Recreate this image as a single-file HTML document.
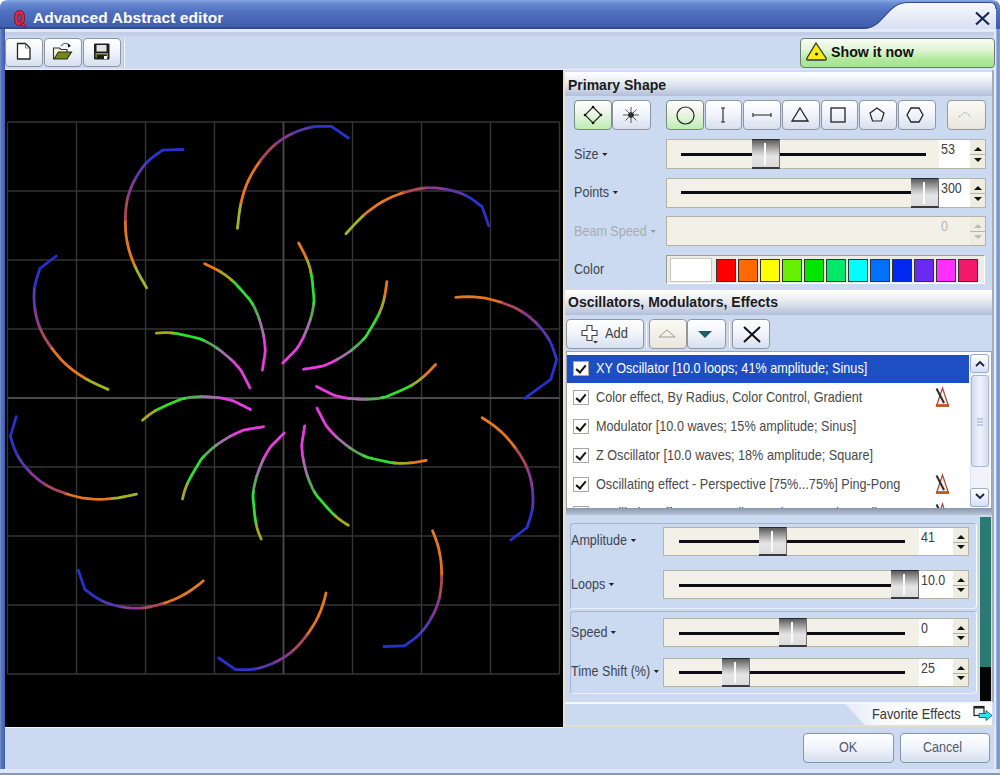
<!DOCTYPE html>
<html><head><meta charset="utf-8">
<style>
*{box-sizing:border-box;margin:0;padding:0}
html,body{width:1000px;height:775px;overflow:hidden}
body{position:relative;background:#cbdaf0;font-family:"Liberation Sans",sans-serif;color:#3a4250}
.a{position:absolute}
.btn{position:absolute;border:1px solid #8e96a4;border-radius:4px;background:linear-gradient(#ffffff,#f2f5fb 45%,#d7e0ef)}
.gbtn{position:absolute;border:1px solid #7a8a80;border-radius:4px;background:linear-gradient(#ffffff,#eef5e8 40%,#bdeeb2)}
.dbtn{position:absolute;border:1px solid #9a9a94;border-radius:4px;background:linear-gradient(#fbfaf6,#e8e6dc)}
.sl{position:absolute;background:#f3f1e7;border:1px solid #b5b3a5;border-right:none}
.trk{position:absolute;height:3px;background:#0c0c14}
.th{position:absolute;width:28px;border-top:1px solid #2a2a2a;border-bottom:2px solid #3a3a3a;border-right:1px solid #707070;background:linear-gradient(#5c5c5c,#c8c8c8 45%,#e4e4e4 60%,#dcdcdc)}
.th:after{content:"";position:absolute;left:12px;top:3px;bottom:2px;width:2px;background:#fafafa}
.tb{position:absolute;background:#fff;border-top:1px solid #b5b3a5;border-bottom:1px solid #b5b3a5;font-size:14.5px;color:#404040;padding:1px 0 0 2px}
.tb b{font-weight:normal;display:inline-block;transform:scaleX(.86);transform-origin:0 0}
.sp{position:absolute;width:16px;background:#efece0;border:1px solid #b5b3a5;border-left:none}
.sp i{position:absolute;left:4px;width:0;height:0;border-left:4px solid transparent;border-right:4px solid transparent}
.sp:after{content:"";position:absolute;left:0;right:0;top:50%;height:1px;background:#b8b5a4}
.lbl{position:absolute;font-size:14.3px;color:#3c4452;white-space:nowrap;transform:scaleX(.88);transform-origin:0 0}
.dd{display:inline-block;width:0;height:0;border-left:3px solid transparent;border-right:3px solid transparent;border-top:3px solid #222;vertical-align:middle;margin-left:4px;margin-top:-2px}
.hdr{position:absolute;border-top:1px solid #e0dccb;background:linear-gradient(#ffffff,#f6f7fa 20%,#dde3ee 55%,#b3bfd9);font-weight:bold;font-size:14px;color:#1a1a1a;line-height:16px}
.row{position:absolute;left:0;width:402px;height:28px;font-size:14.3px;color:#4a4a4a;white-space:nowrap}
.cb{position:absolute;left:6px;top:6px;width:16px;height:15px;background:#fff;border:1px solid #a8a8a0}
.cb:after{content:"";position:absolute;left:4px;top:1px;width:4px;height:8px;border-right:2px solid #111;border-bottom:2px solid #111;transform:rotate(40deg)}
.rt{position:absolute;left:29px;top:5px;transform:scaleX(.885);transform-origin:0 0}
</style></head><body>

<!-- window borders -->
<div class="a" style="left:0;top:0;width:5px;height:775px;background:linear-gradient(90deg,#7a90bc,#5476c8 30%,#3e5eb0)"></div>
<div class="a" style="left:994px;top:28px;width:6px;height:747px;background:linear-gradient(90deg,#e8eef9 0,#dfe7f6 30%,#8aa6dc 45%,#6f8fd0 70%,#8ea6d0)"></div>
<div class="a" style="left:0;top:769px;width:1000px;height:4px;background:#dde7f8"></div>
<div class="a" style="left:0;top:773px;width:1000px;height:2px;background:#8898bc"></div>

<!-- title bar -->
<svg class="a" style="left:0;top:0" width="1000" height="29">
 <defs>
  <linearGradient id="tg" x1="0" y1="0" x2="0" y2="1"><stop offset="0" stop-color="#86a6e4"/><stop offset="0.12" stop-color="#6a8ad2"/><stop offset="0.4" stop-color="#5071bf"/><stop offset="1" stop-color="#3d5ca9"/></linearGradient>
  <linearGradient id="tl" x1="0" y1="0" x2="0" y2="1"><stop offset="0" stop-color="#f6f8fd"/><stop offset="0.5" stop-color="#e8edf8"/><stop offset="1" stop-color="#d6dff2"/></linearGradient>
 </defs>
 <rect x="0" y="0" width="1000" height="29" fill="#ffffff"/>
 <path d="M0 8 Q0 0 8 0 L992 0 Q1000 0 1000 8 L1000 29 L0 29 Z" fill="url(#tg)"/>
 <rect x="0" y="27.3" width="870" height="1.5" fill="#2c4690"/>
 <path d="M864 29 C884 28.5 886 2.5 908 2.5 L990 2.5 Q996 2.5 996 9 L996 29 Z" fill="url(#tl)"/>
 <path d="M864 28.3 C884 28 886 2.5 908 2.5 L990 2.5 Q996 2.5 996 9" fill="none" stroke="#34488a" stroke-width="1.1"/>
 <rect x="0" y="0" width="8" height="6" fill="#fff" opacity="0"/>
 <path d="M976 12.5 L989 24.5 M989 12.5 L976 24.5" stroke="#1c2252" stroke-width="2.2"/>
</svg>
<!-- Q logo -->
<svg class="a" style="left:12px;top:9px" width="16" height="20">
 <path d="M7.5 1.5 C3.5 1.5 2.5 5 2.5 9 C2.5 13 3.5 16.5 7.5 16.5 C11.5 16.5 12.5 13 12.5 9 C12.5 5 11.5 1.5 7.5 1.5 Z M7.5 5 C8.8 5 9 7 9 9 C9 11 8.8 13 7.5 13 C6.2 13 6 11 6 9 C6 7 6.2 5 7.5 5 Z" fill="#ee2244" fill-rule="evenodd" stroke="#5a1020" stroke-width="0.8"/>
 <path d="M8.5 15 L12 18.5 L14 17.5 L11 14 Z" fill="#ee2244" stroke="#5a1020" stroke-width="0.7"/>
</svg>
<div class="a" style="left:33px;top:9px;font-size:15.5px;font-weight:bold;color:#fff;white-space:nowrap;letter-spacing:0.1px">Advanced Abstract editor</div>

<!-- toolbar area -->
<div class="a" style="left:5px;top:28.5px;width:989px;height:41.5px;background:linear-gradient(#e6edf9,#e2e9f7 6%,#c2cde4 8%,#c4d0e8 16%,#cbdaf0 19%,#cbdaf0 96%,#e6ecf8 97%)"></div>
<div class="btn" style="left:5px;top:38px;width:38px;height:29px"></div>
<div class="btn" style="left:44px;top:38px;width:38px;height:29px"></div>
<div class="btn" style="left:83px;top:38px;width:38px;height:29px"></div>
<div class="a" style="left:122.5px;top:38px;width:2px;height:30px;background:#c9c6b6;border-right:1px solid #f4f6fb"></div>
<svg class="a" style="left:5px;top:38px" width="120" height="29">
 <path d="M12.5 5.5 h8 l4.5 4.5 v11 h-12.5 z" fill="#fff" stroke="#222" stroke-width="1.3" stroke-linejoin="round"/>
 <path d="M20.5 5.5 v4.5 h4.5" fill="none" stroke="#666" stroke-width="0.8"/>
 <path d="M48.5 10 h6 l1.5 1.5 h6 v9 h-13.5 z" fill="#f6f0d8" stroke="#333" stroke-width="1.1"/>
 <path d="M49 21 l4.5 -7 h13 l-4.5 7 z" fill="#6e8a1c" stroke="#2a2a10" stroke-width="1.1"/>
 <path d="M56 8 q4 -5 8 -1" fill="none" stroke="#555" stroke-width="1.1"/>
 <path d="M63 5.5 l3 2.5 l-3 1.5 z" fill="#111"/>
 <rect x="89" y="5.5" width="15.5" height="16" rx="1" fill="#1e1e1e"/>
 <rect x="91.5" y="7" width="10" height="6.5" fill="#e4e4e4"/>
 <rect x="90.5" y="15" width="12.5" height="1.6" fill="#8aa030"/>
 <rect x="90.5" y="16.6" width="1.3" height="3" fill="#8aa030"/>
 <rect x="101.7" y="16.6" width="1.3" height="3" fill="#8aa030"/>
 <rect x="99" y="18" width="3" height="3" fill="#fff"/>
</svg>
<!-- show it now -->
<div class="a" style="left:800px;top:38px;width:195px;height:30px;border:1px solid #707a70;border-radius:4px;background:linear-gradient(#fafdf6,#e4f6da 35%,#aee89a 75%,#a6e492)"></div>
<svg class="a" style="left:805px;top:41px" width="24" height="20"><path d="M11 2 L21 17 Q22 19 20 19 L3 19 Q1 19 2 17 Z" fill="#f8ec10" stroke="#333" stroke-width="1.3"/><circle cx="11.5" cy="13" r="1.6" fill="#222"/></svg>
<div class="a" style="left:831px;top:44px;font-size:14.2px;font-weight:bold;color:#111;white-space:nowrap">Show it now</div>

<!-- canvas -->
<svg class="a" style="left:5px;top:70px" width="558" height="657">
 <rect width="558" height="657" fill="#000"/>
 <g transform="translate(-5 -70)" stroke="#353535" stroke-width="1.4" fill="none">
  <path d="M7.5 122V674M76.5 122V674M145.5 122V674M214.5 122V674M352.5 122V674M421.5 122V674M490.5 122V674M559.5 122V674"/>
  <path d="M7.5 122H559.5M7.5 191H559.5M7.5 260H559.5M7.5 329H559.5M7.5 467H559.5M7.5 536H559.5M7.5 605H559.5M7.5 674H559.5"/>
  <path d="M283.5 122V674M7.5 398H559.5" stroke="#4a4a4a" stroke-width="1.8"/>
 </g>
 <g transform="translate(-5 -70)" stroke-width="2.8" stroke-linecap="round" stroke-linejoin="round" fill="none"><path d="M108.0 389.4 103.8 387.5 97.6 384.7 90.9 381.4 84.9 378.2" stroke="#a4b41e"/><path d="M84.9 378.2 79.8 375.0 74.9 371.6 70.3 368.1 65.9 364.3" stroke="#e8781e"/><path d="M65.9 364.3 61.7 360.2 57.8 355.8 54.0 351.2 50.6 346.6" stroke="#e4741e"/><path d="M50.6 346.6 47.4 341.9 44.4 337.0 41.8 332.1 39.6 327.1" stroke="#ae4856"/><path d="M39.6 327.1 37.8 322.2 36.4 317.2 35.4 312.2 34.7 307.2" stroke="#8a3a94"/><path d="M34.7 307.2 34.2 302.1 34.0 297.1 34.1 292.1 34.6 287.2" stroke="#5a38b0"/><path d="M34.6 287.2 35.7 282.0 37.3 276.6 38.9 271.8 40.0 268.5" stroke="#2c34cc"/><path d="M40.0 268.5 56.2 256.0" stroke="#2830d0"/><path d="M146.6 287.9 144.3 283.8 141.0 278.0 137.4 271.4 134.5 265.2" stroke="#a4b41e"/><path d="M134.5 265.2 132.2 259.6 130.2 254.1 128.6 248.5 127.3 242.8" stroke="#e8781e"/><path d="M127.3 242.8 126.3 237.0 125.7 231.2 125.4 225.3 125.3 219.5" stroke="#e4741e"/><path d="M125.3 219.5 125.5 213.8 126.0 208.1 126.7 202.6 127.8 197.3" stroke="#ae4856"/><path d="M127.8 197.3 129.3 192.3 131.1 187.4 133.2 182.7 135.6 178.3" stroke="#8a3a94"/><path d="M135.6 178.3 138.1 173.9 140.9 169.7 144.0 165.7 147.2 162.0" stroke="#5a38b0"/><path d="M147.2 162.0 151.2 158.4 155.7 155.0 159.8 152.1 162.6 150.1" stroke="#2c34cc"/><path d="M162.6 150.1 183.1 149.5" stroke="#2830d0"/><path d="M237.4 228.4 238.0 223.8 238.7 217.1 239.7 209.7 241.0 203.0" stroke="#a4b41e"/><path d="M241.0 203.0 242.4 197.1 244.1 191.5 246.0 186.0 248.3 180.6" stroke="#e8781e"/><path d="M248.3 180.6 250.9 175.4 253.9 170.3 257.1 165.3 260.4 160.6" stroke="#e4741e"/><path d="M260.4 160.6 263.9 156.1 267.6 151.8 271.5 147.8 275.5 144.1" stroke="#ae4856"/><path d="M275.5 144.1 279.7 140.9 284.0 138.1 288.4 135.5 293.0 133.3" stroke="#8a3a94"/><path d="M293.0 133.3 297.6 131.2 302.4 129.5 307.2 128.1 312.0 127.0" stroke="#5a38b0"/><path d="M312.0 127.0 317.3 126.4 322.9 126.3 327.9 126.4 331.4 126.4" stroke="#2c34cc"/><path d="M331.4 126.4 348.3 138.0" stroke="#2830d0"/><path d="M345.9 233.8 349.1 230.3 353.6 225.4 358.8 220.0 363.7 215.2" stroke="#a4b41e"/><path d="M363.7 215.2 368.3 211.3 373.0 207.8 377.8 204.5 382.8 201.5" stroke="#e8781e"/><path d="M382.8 201.5 388.0 198.7 393.4 196.3 398.9 194.2 404.4 192.4" stroke="#e4741e"/><path d="M404.4 192.4 409.9 190.8 415.4 189.5 420.9 188.5 426.3 187.9" stroke="#ae4856"/><path d="M426.3 187.9 431.5 187.8 436.7 188.0 441.8 188.6 446.8 189.4" stroke="#8a3a94"/><path d="M446.8 189.4 451.7 190.5 456.6 191.9 461.3 193.5 465.8 195.5" stroke="#5a38b0"/><path d="M465.8 195.5 470.4 198.1 475.1 201.3 479.1 204.3 481.9 206.4" stroke="#2c34cc"/><path d="M481.9 206.4 488.8 225.7" stroke="#2830d0"/><path d="M455.8 297.3 461.9 296.9 467.7 296.7 473.6 296.9 479.3 297.3" stroke="#e8781e"/><path d="M479.3 297.3 485.2 298.2 490.9 299.5 496.6 301.0 502.1 302.7" stroke="#e4741e"/><path d="M502.1 302.7 507.5 304.7 512.8 306.8 517.8 309.3 522.5 312.0" stroke="#ae4856"/><path d="M522.5 312.0 526.8 314.9 530.9 318.2 534.7 321.6 538.2 325.2" stroke="#8a3a94"/><path d="M538.2 325.2 541.6 329.0 544.7 333.0 547.5 337.1 550.0 341.3" stroke="#5a38b0"/><path d="M550.0 341.3 552.2 346.2 554.1 351.5 555.6 356.3 556.6 359.6" stroke="#2c34cc"/><path d="M556.6 359.6 550.8 379.3 524.7 398.3" stroke="#2830d0"/><path d="M482.1 417.8 487.2 421.0 492.1 424.4 496.7 427.9 501.1 431.7" stroke="#e8781e"/><path d="M501.1 431.7 505.3 435.8 509.2 440.2 513.0 444.8 516.4 449.4" stroke="#e4741e"/><path d="M516.4 449.4 519.6 454.1 522.6 459.0 525.2 463.9 527.4 468.9" stroke="#ae4856"/><path d="M527.4 468.9 529.2 473.8 530.6 478.8 531.6 483.8 532.3 488.8" stroke="#8a3a94"/><path d="M532.3 488.8 532.8 493.9 533.0 498.9 532.9 503.9 532.4 508.8" stroke="#5a38b0"/><path d="M532.4 508.8 531.3 514.0 529.7 519.4 528.1 524.2 527.0 527.5" stroke="#2c34cc"/><path d="M527.0 527.5 510.8 540.0" stroke="#2830d0"/><path d="M432.5 530.8 434.8 536.4 436.8 541.9 438.4 547.5 439.7 553.2" stroke="#e8781e"/><path d="M439.7 553.2 440.7 559.0 441.3 564.8 441.6 570.7 441.7 576.5" stroke="#e4741e"/><path d="M441.7 576.5 441.5 582.2 441.0 587.9 440.3 593.4 439.2 598.7" stroke="#ae4856"/><path d="M439.2 598.7 437.7 603.7 435.9 608.6 433.8 613.3 431.4 617.7" stroke="#8a3a94"/><path d="M431.4 617.7 428.9 622.1 426.1 626.3 423.0 630.3 419.7 634.0" stroke="#5a38b0"/><path d="M419.7 634.0 415.8 637.6 411.3 641.0 407.2 643.9 404.4 645.9" stroke="#2c34cc"/><path d="M404.4 645.9 383.9 646.5" stroke="#2830d0"/><path d="M326.0 593.0 324.6 598.9 322.9 604.5 321.0 610.0 318.7 615.4" stroke="#e8781e"/><path d="M318.7 615.4 316.1 620.6 313.1 625.7 309.9 630.7 306.6 635.4" stroke="#e4741e"/><path d="M306.6 635.4 303.1 639.9 299.4 644.2 295.5 648.2 291.5 651.9" stroke="#ae4856"/><path d="M291.5 651.9 287.3 655.1 283.0 657.9 278.6 660.5 274.0 662.7" stroke="#8a3a94"/><path d="M274.0 662.7 269.4 664.8 264.6 666.5 259.8 667.9 255.0 669.0" stroke="#5a38b0"/><path d="M255.0 669.0 249.7 669.6 244.1 669.7 239.1 669.6 235.6 669.6" stroke="#2c34cc"/><path d="M235.6 669.6 218.7 658.0" stroke="#2830d0"/><path d="M203.3 580.8 198.7 584.7 194.0 588.2 189.2 591.5 184.2 594.5" stroke="#e8781e"/><path d="M184.2 594.5 179.0 597.3 173.6 599.7 168.1 601.8 162.6 603.6" stroke="#e4741e"/><path d="M162.6 603.6 157.1 605.2 151.6 606.5 146.1 607.5 140.7 608.1" stroke="#ae4856"/><path d="M140.7 608.1 135.5 608.2 130.3 608.0 125.2 607.4 120.2 606.6" stroke="#8a3a94"/><path d="M120.2 606.6 115.3 605.5 110.4 604.1 105.7 602.5 101.2 600.5" stroke="#5a38b0"/><path d="M101.2 600.5 96.6 597.9 91.9 594.7 87.9 591.7 85.1 589.6" stroke="#2c34cc"/><path d="M85.1 589.6 78.2 570.3" stroke="#2830d0"/><path d="M136.5 494.2 131.9 495.1 125.3 496.5 118.0 497.8 111.2 498.7" stroke="#a4b41e"/><path d="M111.2 498.7 105.1 499.1 99.3 499.3 93.4 499.1 87.7 498.7" stroke="#e8781e"/><path d="M87.7 498.7 81.8 497.8 76.1 496.5 70.4 495.0 64.9 493.3" stroke="#e4741e"/><path d="M64.9 493.3 59.5 491.3 54.2 489.2 49.2 486.7 44.5 484.0" stroke="#ae4856"/><path d="M44.5 484.0 40.2 481.1 36.1 477.8 32.3 474.4 28.8 470.8" stroke="#8a3a94"/><path d="M28.8 470.8 25.4 467.0 22.3 463.0 19.5 458.9 17.0 454.7" stroke="#5a38b0"/><path d="M17.0 454.7 14.8 449.8 12.9 444.5 11.4 439.7 10.4 436.4" stroke="#2c34cc"/><path d="M10.4 436.4 16.2 416.7" stroke="#2830d0"/><path d="M262.3 370.1 262.6 368.7 262.9 366.6 263.3 364.3 263.6 362.1 263.9 360.1 264.3 358.0 264.6 356.0 264.8 354.3 265.0 353.1 265.1 352.3 265.2 351.4 265.2 350.4 265.2 349.0 265.1 347.6 264.9 345.9 264.8 344.2 264.6 342.4 264.4 340.5 264.1 338.4 263.6 335.6" stroke="#e83ce0"/><path d="M263.6 335.6 262.8 332.0 261.8 327.8 260.6 323.3 259.2 319.1" stroke="#a070a8"/><path d="M259.2 319.1 257.8 315.1 256.1 311.2 254.4 307.4 252.6 304.1" stroke="#5aa85a"/><path d="M252.6 304.1 251.1 301.7 249.8 299.8 248.1 297.9 245.9 295.4 242.9 291.9 239.2 287.7 235.4 283.6 231.7 280.1" stroke="#30e030"/><path d="M231.7 280.1 228.4 277.3 225.2 274.9 222.0 272.8 218.7 270.8" stroke="#a8a820"/><path d="M218.7 270.8 214.9 268.7 210.9 266.7 207.2 264.9 204.7 263.7" stroke="#e8781e"/><path d="M282.8 363.0 283.8 362.0 285.3 360.5 286.9 358.9 288.5 357.3 290.0 355.8 291.5 354.3 292.8 352.9 294.0 351.7 294.9 350.8 295.5 350.2 296.1 349.6 296.7 348.7 297.5 347.6 298.2 346.4 299.1 345.0 300.0 343.4 300.9 341.9 301.8 340.3 302.9 338.4 304.1 335.8" stroke="#e83ce0"/><path d="M304.1 335.8 305.5 332.4 307.2 328.4 308.8 324.1 310.2 319.9" stroke="#a070a8"/><path d="M310.2 319.9 311.4 315.8 312.4 311.6 313.2 307.6 313.7 303.9" stroke="#5aa85a"/><path d="M313.7 303.9 314.0 301.0 313.9 298.7 313.8 296.2 313.4 292.9 313.0 288.3 312.5 282.8 311.8 277.2 310.9 272.2" stroke="#30e030"/><path d="M310.9 272.2 309.9 267.9 308.7 264.1 307.3 260.5 305.8 257.0" stroke="#a8a820"/><path d="M305.8 257.0 304.0 253.1 301.9 249.1 300.0 245.5 298.7 243.0" stroke="#e8781e"/><path d="M303.5 369.3 304.9 369.0 307.0 368.7 309.3 368.4 311.5 368.0 313.5 367.7 315.6 367.3 317.6 367.0 319.2 366.7 320.4 366.5 321.3 366.4 322.1 366.2 323.1 365.9 324.4 365.5 325.8 364.9 327.3 364.3 328.9 363.5 330.6 362.8 332.3 362.1 334.2 361.1 336.7 359.8" stroke="#e83ce0"/><path d="M336.7 359.8 339.9 357.9 343.6 355.6 347.4 353.1 351.0 350.6" stroke="#a070a8"/><path d="M351.0 350.6 354.3 347.9 357.6 345.1 360.6 342.3 363.2 339.6" stroke="#5aa85a"/><path d="M363.2 339.6 365.1 337.5 366.5 335.6 367.8 333.4 369.5 330.6 371.9 326.6 374.7 321.8 377.4 316.9 379.7 312.3" stroke="#30e030"/><path d="M379.7 312.3 381.3 308.3 382.6 304.5 383.6 300.8 384.5 297.0" stroke="#a8a820"/><path d="M384.5 297.0 385.3 292.8 386.0 288.3 386.5 284.3 386.9 281.6" stroke="#e8781e"/><path d="M316.6 386.5 317.8 387.2 319.7 388.1 321.8 389.2 323.7 390.2 325.6 391.1 327.5 392.1 329.3 393.0 330.8 393.7 331.9 394.2 332.7 394.6 333.4 395.0 334.4 395.3 335.7 395.7 337.2 396.1 338.7 396.4 340.5 396.8 342.2 397.2 344.1 397.6 346.2 398.0 349.0 398.3" stroke="#e83ce0"/><path d="M349.0 398.3 352.7 398.7 357.0 399.0 361.6 399.3 366.0 399.3" stroke="#a070a8"/><path d="M366.0 399.3 370.3 399.1 374.6 398.8 378.7 398.3 382.3 397.7" stroke="#5aa85a"/><path d="M382.3 397.7 385.1 397.0 387.3 396.3 389.7 395.3 392.7 394.0 397.0 392.2 402.0 390.0 407.2 387.6 411.7 385.2" stroke="#30e030"/><path d="M411.7 385.2 415.4 382.9 418.6 380.6 421.6 378.2 424.5 375.7" stroke="#a8a820"/><path d="M424.5 375.7 427.7 372.7 430.9 369.5 433.6 366.6 435.6 364.6" stroke="#e8781e"/><path d="M317.0 408.1 317.7 409.4 318.6 411.3 319.7 413.4 320.7 415.3 321.6 417.2 322.6 419.1 323.5 420.8 324.3 422.3 324.9 423.4 325.3 424.2 325.7 424.9 326.3 425.8 327.1 426.8 328.0 428.0 329.1 429.2 330.3 430.5 331.5 431.9 332.7 433.3 334.2 434.9 336.3 436.8" stroke="#e83ce0"/><path d="M336.3 436.8 339.1 439.2 342.4 442.0 345.9 444.9 349.5 447.5" stroke="#a070a8"/><path d="M349.5 447.5 353.0 449.9 356.7 452.1 360.3 454.1 363.6 455.8" stroke="#5aa85a"/><path d="M363.6 455.8 366.3 456.9 368.5 457.6 371.0 458.2 374.2 459.0 378.8 460.0 384.1 461.2 389.7 462.3 394.7 463.0" stroke="#30e030"/><path d="M394.7 463.0 399.0 463.3 403.0 463.3 406.9 463.1 410.7 462.8" stroke="#a8a820"/><path d="M410.7 462.8 415.0 462.3 419.5 461.6 423.4 460.8 426.2 460.3" stroke="#e8781e"/><path d="M304.7 425.9 304.4 427.3 304.1 429.4 303.7 431.7 303.4 433.9 303.1 435.9 302.7 438.0 302.4 440.0 302.2 441.7 302.0 442.9 301.9 443.7 301.8 444.6 301.8 445.6 301.8 447.0 301.9 448.4 302.1 450.1 302.2 451.8 302.4 453.6 302.6 455.5 302.9 457.6 303.4 460.4" stroke="#e83ce0"/><path d="M303.4 460.4 304.2 464.0 305.2 468.2 306.4 472.7 307.8 476.9" stroke="#a070a8"/><path d="M307.8 476.9 309.2 480.9 310.9 484.8 312.6 488.6 314.4 491.9" stroke="#5aa85a"/><path d="M314.4 491.9 315.9 494.3 317.2 496.2 318.9 498.1 321.1 500.6 324.1 504.1 327.8 508.3 331.6 512.4 335.3 515.9" stroke="#30e030"/><path d="M335.3 515.9 338.6 518.7 341.8 521.1 345.0 523.2 348.3 525.2" stroke="#a8a820"/><path d="M284.2 433.0 283.2 434.0 281.7 435.5 280.1 437.1 278.5 438.7 277.0 440.2 275.5 441.7 274.2 443.1 273.0 444.3 272.1 445.2 271.5 445.8 270.9 446.4 270.3 447.3 269.5 448.4 268.8 449.6 267.9 451.0 267.0 452.6 266.1 454.1 265.2 455.7 264.1 457.6 262.9 460.2" stroke="#e83ce0"/><path d="M262.9 460.2 261.5 463.6 259.8 467.6 258.2 471.9 256.8 476.1" stroke="#a070a8"/><path d="M256.8 476.1 255.6 480.2 254.6 484.4 253.8 488.4 253.3 492.1" stroke="#5aa85a"/><path d="M253.3 492.1 253.0 495.0 253.1 497.3 253.2 499.8 253.6 503.1 254.0 507.7 254.5 513.2 255.2 518.8 256.1 523.8" stroke="#30e030"/><path d="M256.1 523.8 257.1 528.1 258.3 531.9 259.7 535.5 261.2 539.0" stroke="#a8a820"/><path d="M263.5 426.7 262.1 427.0 260.0 427.3 257.7 427.6 255.5 428.0 253.5 428.3 251.4 428.7 249.4 429.0 247.8 429.3 246.6 429.5 245.7 429.6 244.9 429.8 243.9 430.1 242.6 430.5 241.2 431.1 239.7 431.7 238.1 432.5 236.4 433.2 234.7 433.9 232.8 434.9 230.3 436.2" stroke="#e83ce0"/><path d="M230.3 436.2 227.1 438.1 223.4 440.4 219.6 442.9 216.0 445.4" stroke="#a070a8"/><path d="M216.0 445.4 212.7 448.1 209.4 450.9 206.4 453.7 203.8 456.4" stroke="#5aa85a"/><path d="M203.8 456.4 201.9 458.5 200.5 460.4 199.2 462.6 197.5 465.4 195.1 469.4 192.3 474.2 189.6 479.1 187.3 483.7" stroke="#30e030"/><path d="M187.3 483.7 185.7 487.7 184.4 491.5 183.4 495.2 182.5 499.0" stroke="#a8a820"/><path d="M250.4 409.5 249.2 408.8 247.3 407.9 245.2 406.8 243.3 405.8 241.4 404.9 239.5 403.9 237.7 403.0 236.2 402.3 235.1 401.8 234.3 401.4 233.6 401.0 232.6 400.7 231.3 400.3 229.8 399.9 228.3 399.6 226.5 399.2 224.8 398.8 222.9 398.4 220.8 398.0 218.0 397.7" stroke="#e83ce0"/><path d="M218.0 397.7 214.3 397.3 210.0 397.0 205.4 396.7 201.0 396.7" stroke="#a070a8"/><path d="M201.0 396.7 196.7 396.9 192.4 397.2 188.3 397.7 184.7 398.3" stroke="#5aa85a"/><path d="M184.7 398.3 181.9 399.0 179.7 399.7 177.3 400.7 174.3 402.0 170.0 403.8 165.0 406.0 159.8 408.4 155.3 410.8" stroke="#30e030"/><path d="M155.3 410.8 151.6 413.1 148.4 415.4 145.4 417.8 142.5 420.3" stroke="#a8a820"/><path d="M250.0 387.9 249.3 386.6 248.4 384.7 247.3 382.6 246.3 380.7 245.4 378.8 244.4 376.9 243.5 375.2 242.7 373.7 242.1 372.6 241.7 371.8 241.3 371.1 240.7 370.2 239.9 369.2 239.0 368.0 237.9 366.8 236.7 365.5 235.5 364.1 234.3 362.7 232.8 361.1 230.7 359.2" stroke="#e83ce0"/><path d="M230.7 359.2 227.9 356.8 224.6 354.0 221.1 351.1 217.5 348.5" stroke="#a070a8"/><path d="M217.5 348.5 214.0 346.1 210.3 343.9 206.7 341.9 203.4 340.2" stroke="#5aa85a"/><path d="M203.4 340.2 200.7 339.1 198.5 338.4 196.0 337.8 192.8 337.0 188.2 336.0 182.9 334.8 177.3 333.7 172.3 333.0" stroke="#30e030"/><path d="M172.3 333.0 168.0 332.7 164.0 332.7 160.1 332.9 156.3 333.2" stroke="#a8a820"/></g>
</svg>
<div class="a" style="left:563px;top:70px;width:2px;height:657px;background:#e6e2cf"></div>
<div class="a" style="left:5px;top:727px;width:558px;height:1px;background:#f4f6fb"></div>

<!-- right panel -->
<div class="a" style="left:565px;top:70px;width:427px;height:633px;background:#cbdaf0"></div>
<div class="a" style="left:992px;top:70px;width:2px;height:633px;background:#a8aeb8"></div>
<div class="hdr" style="left:565px;top:71px;width:427px;height:25px;padding:5px 0 0 3px">Primary Shape</div>

<div class="gbtn" style="left:574px;top:100px;width:38px;height:30px"></div>
<div class="btn" style="left:612px;top:100px;width:39px;height:30px"></div>
<div class="gbtn" style="left:666px;top:100px;width:38px;height:30px"></div>
<div class="btn" style="left:705px;top:100px;width:37px;height:30px"></div>
<div class="btn" style="left:743px;top:100px;width:38px;height:30px"></div>
<div class="btn" style="left:782px;top:100px;width:38px;height:30px"></div>
<div class="btn" style="left:821px;top:100px;width:37px;height:30px"></div>
<div class="btn" style="left:859px;top:100px;width:38px;height:30px"></div>
<div class="btn" style="left:898px;top:100px;width:38px;height:30px"></div>
<div class="dbtn" style="left:947px;top:100px;width:39px;height:30px"></div>
<svg class="a" style="left:565px;top:100px" width="427" height="30" fill="none" stroke="#222" stroke-width="1.1">
 <path d="M28 7 L36 15 L28 23 L20 15 Z" stroke="#1a1a1a"/>
 <g fill="#111" stroke="none"><circle cx="28" cy="7" r="1.3"/><circle cx="36" cy="15" r="1.3"/><circle cx="28" cy="23" r="1.3"/><circle cx="20" cy="15" r="1.3"/></g>
 <path d="M66 7 V23 M58 15 H74 M60.5 9.5 L71.5 20.5 M71.5 9.5 L60.5 20.5" stroke="#444" stroke-width="0.9"/>
 <circle cx="66" cy="15" r="2.2" fill="#333"/>
 <circle cx="120.5" cy="15.5" r="8.5" stroke-width="1.2"/>
 <path d="M158 8 V22 M156 8 H160 M156 22 H160" />
 <path d="M188 15 H206 M188 13 V17 M206 13 V17"/>
 <path d="M235 8 L243 21 H227 Z" stroke-width="1.3"/>
 <rect x="266" y="8" width="14" height="14" stroke-width="1.3"/>
 <path d="M312 8 L319 13 L316.5 21 H307.5 L305 13 Z" stroke-width="1.2"/>
 <path d="M346 8 H354 L358 15 L354 22 H346 L342 15 Z" stroke-width="1.3"/>
 <path d="M394 17 L400 12 L406 17" stroke="#aaa" stroke-dasharray="1.5 1.5"/>
</svg>

<!-- Size / Points / Beam / Color rows -->
<div class="lbl" style="left:574px;top:146px">Size<span class="dd"></span></div>
<div class="lbl" style="left:574px;top:184px">Points<span class="dd"></span></div>
<div class="lbl" style="left:574px;top:223px;color:#a8acb4">Beam Speed<span class="dd" style="border-top-color:#999"></span></div>
<div class="lbl" style="left:574px;top:261px">Color</div>

<div class="sl" style="left:666px;top:139px;width:273px;height:30px"></div>
<div class="trk" style="left:681px;top:153px;width:245px"></div>
<div class="th" style="left:752px;top:139px;height:30px"></div>
<div class="tb" style="left:939px;top:139px;width:31px;height:30px"><b>53</b></div>
<div class="sp" style="left:970px;top:139px;height:30px"><i style="top:7px;border-bottom:4px solid #111"></i><i style="top:18px;border-top:4px solid #111"></i></div>

<div class="sl" style="left:666px;top:178px;width:273px;height:30px"></div>
<div class="trk" style="left:681px;top:191px;width:245px"></div>
<div class="th" style="left:911px;top:178px;height:30px"></div>
<div class="tb" style="left:939px;top:178px;width:31px;height:30px"><b>300</b></div>
<div class="sp" style="left:970px;top:178px;height:30px"><i style="top:7px;border-bottom:4px solid #111"></i><i style="top:18px;border-top:4px solid #111"></i></div>

<div class="sl" style="left:666px;top:216px;width:273px;height:30px"></div>
<div class="tb" style="left:939px;top:216px;width:31px;height:30px;background:#f3f1e7;color:#b8b8b0"><b>0</b></div>
<div class="sp" style="left:970px;top:216px;height:30px"><i style="top:7px;border-bottom:4px solid #bbb"></i><i style="top:18px;border-top:4px solid #bbb"></i></div>

<div class="a" style="left:666px;top:255px;width:319px;height:29px;background:#ecebe4;border:1px solid #9c9c94;border-bottom-color:#fff;border-right-color:#fff"></div>
<div class="a" style="left:670px;top:258px;width:42px;height:24px;background:#fff;border:1px solid #c8c8c0"></div>
<svg class="a" style="left:716px;top:259px" width="262" height="23" stroke="#333" stroke-width="1">
 <rect x="0.5" y="0.5" width="19" height="22" fill="#ff0000"/>
 <rect x="22.5" y="0.5" width="19" height="22" fill="#ff6a00"/>
 <rect x="44.5" y="0.5" width="19" height="22" fill="#ffff00"/>
 <rect x="66.5" y="0.5" width="19" height="22" fill="#66f000"/>
 <rect x="88.5" y="0.5" width="19" height="22" fill="#00e600"/>
 <rect x="110.5" y="0.5" width="19" height="22" fill="#00e86a"/>
 <rect x="132.5" y="0.5" width="19" height="22" fill="#00ffff"/>
 <rect x="154.5" y="0.5" width="19" height="22" fill="#0070ff"/>
 <rect x="176.5" y="0.5" width="19" height="22" fill="#0028f0"/>
 <rect x="198.5" y="0.5" width="19" height="22" fill="#6a2af0"/>
 <rect x="220.5" y="0.5" width="19" height="22" fill="#ff30ff"/>
 <rect x="242.5" y="0.5" width="19" height="22" fill="#f01868"/>
</svg>

<div class="hdr" style="left:565px;top:289px;width:427px;height:26px;padding:3.5px 0 0 3px">Oscillators, Modulators, Effects</div>

<!-- osc toolbar -->
<div class="btn" style="left:566px;top:319px;width:78px;height:30px"></div>
<div class="a" style="left:645px;top:321px;width:2px;height:27px;background:#d6cfba;border-right:1px solid #fff"></div>
<div class="dbtn" style="left:649px;top:319px;width:38px;height:30px"></div>
<div class="btn" style="left:687px;top:319px;width:39px;height:30px"></div>
<div class="a" style="left:728px;top:321px;width:2px;height:27px;background:#d6cfba;border-right:1px solid #fff"></div>
<div class="btn" style="left:732px;top:319px;width:38px;height:30px"></div>
<svg class="a" style="left:566px;top:319px" width="210" height="30">
 <path d="M21 6.5 h5 v5 h5 v5 h-5 v5 h-5 v-5 h-5 v-5 h5 z" fill="#fff" stroke="#444" stroke-width="1.1"/>
 <path d="M27 22 l2.5 2.5 l2.5 -2.5" fill="#333"/>
 <path d="M93 18 L101 11 L109 18 Z" fill="#f4f2ea" stroke="#9a9a90" stroke-width="1"/>
 <path d="M132 12 L146 12 L139 19 Z" fill="#1e5f60"/>
 <path d="M178 8 L194 23 M194 8 L178 23" stroke="#111" stroke-width="2"/>
</svg>
<div class="a" style="left:605px;top:325px;font-size:14.3px;color:#404040;transform:scaleX(.9);transform-origin:0 0">Add</div>

<!-- list -->
<div class="a" style="left:566px;top:351px;width:426px;height:158px;background:#fff;border:1px solid #9aa4b4;overflow:hidden">
 <div class="row" style="top:3px;background:#1d4fc2;color:#fff"><div class="cb"></div><div class="rt">XY Oscillator [10.0 loops; 41% amplitude; Sinus]</div></div>
 <div class="row" style="top:32px"><div class="cb"></div><div class="rt">Color effect, By Radius, Color Control, Gradient</div></div>
 <div class="row" style="top:61px"><div class="cb"></div><div class="rt">Modulator [10.0 waves; 15% amplitude; Sinus]</div></div>
 <div class="row" style="top:90px"><div class="cb"></div><div class="rt">Z Oscillator [10.0 waves; 18% amplitude; Square]</div></div>
 <div class="row" style="top:119px"><div class="cb"></div><div class="rt">Oscillating effect - Perspective [75%...75%] Ping-Pong</div></div>
 <div class="row" style="top:148px"><div class="cb"></div><div class="rt">Oscillating effect - By Radius, Color Control, Gradient</div></div>
</div>
<svg class="a" style="left:934px;top:386px" width="18" height="123">
 <g id="met"><path d="M8.5 2 L14.5 20 H2.5 Z" fill="#f2f0ee" stroke="#a8483a" stroke-width="1.2"/><path d="M2.5 2.5 L10 17" stroke="#2a2a2a" stroke-width="2"/><path d="M2 19.5 H15" stroke="#c4520e" stroke-width="2.6"/></g>
 <use href="#met" y="87"/>
 <use href="#met" y="116"/>
</svg>
<!-- scrollbar -->
<div class="a" style="left:970px;top:354px;width:20px;height:153px;background:#f0f3fa;border-left:1px solid #e0e6f0"></div>
<div class="a" style="left:970px;top:354px;width:19px;height:19px;border:1px solid #9aaccc;border-radius:3px;background:linear-gradient(#ffffff,#d6e0f2)"></div>
<div class="a" style="left:971px;top:375px;width:18px;height:92px;border:1px solid #a8b8d8;border-radius:3px;background:linear-gradient(90deg,#d2dcee,#eef2fb 50%,#d2dcee)"></div>
<div class="a" style="left:970px;top:488px;width:19px;height:19px;border:1px solid #9aaccc;border-radius:3px;background:linear-gradient(#ffffff,#d6e0f2)"></div>
<svg class="a" style="left:970px;top:354px" width="20" height="153" fill="none" stroke="#1a2040" stroke-width="1.8">
 <path d="M6 12 L10 8 L14 12"/><path d="M6 140 L10 144 L14 140"/>
 <path d="M7 65 H13 M7 68 H13 M7 71 H13" stroke="#9aaac8" stroke-width="1"/>
</svg>
<div class="a" style="left:566px;top:508px;width:426px;height:7px;background:linear-gradient(#8a96aa,#b8c4d8)"></div>

<!-- teal strip -->
<div class="a" style="left:980px;top:517px;width:11px;height:150px;background:#2a7a72"></div>
<div class="a" style="left:980px;top:667px;width:11px;height:34px;background:#050505"></div>

<!-- groups -->
<div class="a" style="left:570px;top:523px;width:407px;height:86px;border:1px solid #a8b4c8;border-radius:4px;border-right-color:#fff;border-bottom-color:#e8eef8"></div>
<div class="a" style="left:570px;top:611px;width:407px;height:83px;border:1px solid #a8b4c8;border-radius:4px;border-right-color:#fff;border-bottom-color:#e8eef8"></div>

<div class="lbl" style="left:571px;top:532px">Amplitude<span class="dd"></span></div>
<div class="lbl" style="left:571px;top:576px">Loops<span class="dd"></span></div>
<div class="lbl" style="left:571px;top:624px">Speed<span class="dd"></span></div>
<div class="lbl" style="left:571px;top:663px">Time Shift (%)<span class="dd"></span></div>

<div class="sl" style="left:663px;top:527px;width:256px;height:29px"></div>
<div class="trk" style="left:679px;top:540px;width:226px"></div>
<div class="th" style="left:759px;top:527px;height:29px"></div>
<div class="tb" style="left:919px;top:527px;width:34px;height:29px"><b>41</b></div>
<div class="sp" style="left:953px;top:527px;height:29px"><i style="top:7px;border-bottom:4px solid #111"></i><i style="top:17px;border-top:4px solid #111"></i></div>

<div class="sl" style="left:663px;top:570px;width:256px;height:29px"></div>
<div class="trk" style="left:679px;top:584px;width:226px"></div>
<div class="th" style="left:891px;top:570px;height:29px"></div>
<div class="tb" style="left:919px;top:570px;width:34px;height:29px"><b>10.0</b></div>
<div class="sp" style="left:953px;top:570px;height:29px"><i style="top:7px;border-bottom:4px solid #111"></i><i style="top:17px;border-top:4px solid #111"></i></div>

<div class="sl" style="left:663px;top:618px;width:256px;height:29px"></div>
<div class="trk" style="left:679px;top:632px;width:226px"></div>
<div class="th" style="left:779px;top:618px;height:29px"></div>
<div class="tb" style="left:919px;top:618px;width:34px;height:29px"><b>0</b></div>
<div class="sp" style="left:953px;top:618px;height:29px"><i style="top:7px;border-bottom:4px solid #111"></i><i style="top:17px;border-top:4px solid #111"></i></div>

<div class="sl" style="left:663px;top:658px;width:256px;height:29px"></div>
<div class="trk" style="left:679px;top:671px;width:226px"></div>
<div class="th" style="left:722px;top:658px;height:29px"></div>
<div class="tb" style="left:919px;top:658px;width:34px;height:29px"><b>25</b></div>
<div class="sp" style="left:953px;top:658px;height:29px"><i style="top:7px;border-bottom:4px solid #111"></i><i style="top:17px;border-top:4px solid #111"></i></div>

<!-- favorite effects bar -->
<svg class="a" style="left:565px;top:702px" width="430" height="25">
 <rect x="0" y="0" width="430" height="25" fill="#cbdaf0"/>
 <path d="M0 0 H427 V23 H300 L283 2 H0 Z" fill="#cbdaf0"/>
 <path d="M0 0 H427 V2 H0 Z" fill="#f8f9fc"/>
 <path d="M280 2 H427 V23 H300 Z" fill="url(#fg)"/>
 <defs><linearGradient id="fg" x1="0" y1="0" x2="1" y2="0"><stop offset="0" stop-color="#e4eaf6"/><stop offset="0.3" stop-color="#fafbfd"/><stop offset="1" stop-color="#ffffff"/></linearGradient></defs>
 <rect x="0" y="23" width="430" height="2" fill="#e4dfcc"/>
 <rect x="409" y="4.5" width="10" height="9" fill="#f4f4f4" stroke="#222" stroke-width="1.2"/>
 <rect x="409" y="4.5" width="10" height="2" fill="#222"/>
 <path d="M414 11.5 H421 V8.5 L427 13.5 L421 18.5 V15.5 H414 Z" fill="#20e8f0" stroke="#1a4a60" stroke-width="0.8"/>
</svg>
<div class="a" style="left:872px;top:705.5px;font-size:14.3px;color:#383838;white-space:nowrap;transform:scaleX(.895);transform-origin:0 0">Favorite Effects</div>

<!-- bottom buttons -->
<div class="btn" style="left:803px;top:733px;width:91px;height:30px;border-color:#8a94a8"></div>
<div class="btn" style="left:900px;top:733px;width:90px;height:30px;border-color:#8a94a8"></div>
<div class="a" style="left:839px;top:739px;font-size:14.3px;color:#4e5a70;transform:scaleX(.88);transform-origin:0 0">OK</div>
<div class="a" style="left:923px;top:739px;font-size:14.3px;color:#4e5a70;transform:scaleX(.88);transform-origin:0 0">Cancel</div>
</body></html>
